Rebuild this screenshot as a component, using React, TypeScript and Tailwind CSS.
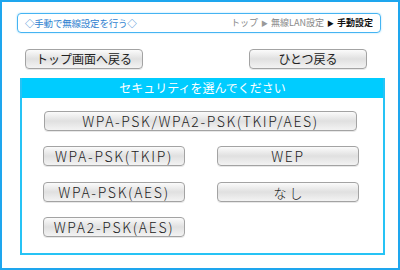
import React from "react";

const jp = { fontFamily: '"Noto Sans CJK JP", "Noto Sans", sans-serif' };

function Btn({ children, className = "" }: { children: React.ReactNode; className?: string }) {
  return (
    <div
      className={
        "flex items-center justify-center h-[20px] rounded-[4px] border border-[#a3a3a3] bg-gradient-to-b from-[#fbfbfb] via-[#e0e0e0] to-[#f3f3f3] text-[#222] leading-none shadow-[0_1px_0_#e8e8e8] " +
        className
      }
      style={jp}
    >
      {children}
    </div>
  );
}

export default function App() {
  return (
    <div className="w-[400px] h-[270px] bg-white border-2 border-[#1ea6ee] box-border overflow-hidden" style={jp}>
      <div className="ml-[15px] mt-[11px] w-[364px] h-[20px] rounded-[4px] border border-[#45b4f2] shadow-[0_0_2px_#9fdcff] flex items-center justify-between pl-[7px] pr-[7px]">
        <span className="text-[9.5px] text-[#2f7fd0] tracking-[-0.2px]">◇手動で無線設定を行う◇</span>
        <span className="text-[9px] text-[#888] flex items-center gap-[3px]">
          <span>トップ</span>
          <span className="text-[#999] text-[7px]">▶</span>
          <span>無線LAN設定</span>
          <span className="text-[#111] text-[7px]">▶</span>
          <span className="text-[#111] font-bold">手動設定</span>
        </span>
      </div>

      <div className="mt-[16px] flex justify-between pl-[23px] pr-[31px]">
        <Btn className="w-[118px] text-[12px]">トップ画面へ戻る</Btn>
        <Btn className="w-[118px] text-[12px]">ひとつ戻る</Btn>
      </div>

      <div className="ml-[18px] mt-[9px] w-[365px] h-[177px] border-2 border-t-0 border-[#26c3f5] flex flex-col">
        <div className="h-[20px] bg-[#00ccff] text-white text-[12px] flex items-center justify-center leading-none">
          セキュリティを選んでください
        </div>
        <div className="flex flex-col pl-[21px]">
          <Btn className="mt-[13px] w-[313px] ml-[1px] text-[14px] font-light tracking-[1.6px]">WPA-PSK/WPA2-PSK(TKIP/AES)</Btn>
          <div className="mt-[15px] flex gap-[32px]">
            <Btn className="w-[142px] text-[14px] font-light tracking-[1.7px]">WPA-PSK(TKIP)</Btn>
            <Btn className="w-[142px] text-[14px] font-light tracking-[1.7px]">WEP</Btn>
          </div>
          <div className="mt-[16px] flex gap-[32px]">
            <Btn className="w-[142px] text-[14px] font-light tracking-[1.7px]">WPA-PSK(AES)</Btn>
            <Btn className="w-[142px] text-[13px] font-light">な し</Btn>
          </div>
          <div className="mt-[15px] flex gap-[32px]">
            <Btn className="w-[142px] text-[14px] font-light tracking-[1.7px]">WPA2-PSK(AES)</Btn>
          </div>
        </div>
      </div>
    </div>
  );
}
